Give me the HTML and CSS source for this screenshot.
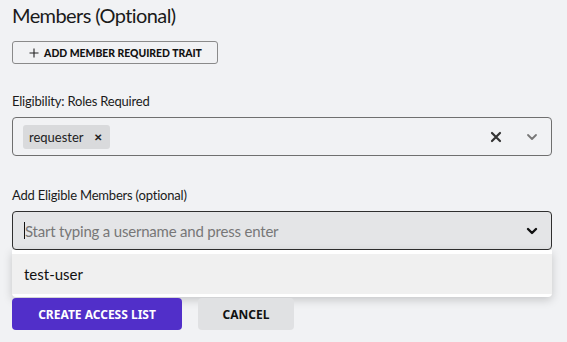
FILE: index.html
```html
<!doctype html>
<html lang="en">

<head>
  <meta charset="UTF-8" />
  <title>Members</title>
  <link rel="stylesheet" href="styles.css">
</head>

<body>
  <div class="section">
    <h2>Members (Optional)</h2>
    <button class="btn-outline" type="button">
      <svg class="plus" width="10" height="10" viewBox="0 0 10 10">
        <path d="M5 0.5 V9.5 M0.5 5 H9.5" stroke="#222" stroke-width="1.1" />
      </svg>
      ADD MEMBER REQUIRED TRAIT
    </button>

    <div class="field">
      <label>Eligibility: Roles Required</label>
      <div class="select">
        <div class="values">
          <span class="chip">requester <span class="chip-x">&#x2715;</span></span>
        </div>
        <div class="indicators">
          <svg class="clear" width="14" height="14" viewBox="0 0 14 14">
            <path d="M3 3 L11 11 M11 3 L3 11" stroke="#333" stroke-width="2.2" stroke-linecap="round" />
          </svg>
          <svg class="chevron" width="14" height="14" viewBox="0 0 14 14">
            <path d="M3 5 L7 9 L11 5" stroke="#777" stroke-width="1.8" fill="none" stroke-linecap="round" stroke-linejoin="round" />
          </svg>
        </div>
      </div>
    </div>

    <div class="field">
      <label>Add Eligible Members (optional)</label>
      <div class="combo">
        <div class="select focused">
          <div class="values">
            <span class="caret"></span><span class="placeholder">Start typing a username and press enter</span>
          </div>
          <div class="indicators">
            <svg class="chevron" width="14" height="14" viewBox="0 0 14 14">
              <path d="M3 5 L7 9 L11 5" stroke="#111" stroke-width="2.4" fill="none" stroke-linecap="round" stroke-linejoin="round" />
            </svg>
          </div>
        </div>
        <div class="menu">
          <div class="option">test-user</div>
        </div>
      </div>
    </div>

    <div class="actions">
      <button class="btn-primary" type="button">CREATE ACCESS LIST</button>
      <button class="btn-secondary" type="button">CANCEL</button>
    </div>
  </div>
</body>

</html>
```

FILE: styles.css
```css
body {
  font-family: Lato, "Noto Sans", sans-serif;
  background: #f1f2f4;
  color: #1a1a1a;
  margin: 0;
}

.section {
  padding: 0 15px 0 12px;
  width: 540px;
}

.section h2 {
  font-size: 20px;
  font-weight: 400;
  margin: 0;
  padding-top: 1px;
  line-height: 28px;
  letter-spacing: -0.6px;
}

.btn-outline {
  margin-top: 12px;
  height: 23px;
  width: 206px;
  border: 1px solid #8a8a8a;
  border-radius: 3px;
  background: transparent;
  font-family: Lato, sans-serif;
  font-size: 10.4px;
  font-weight: 900;
  color: #111;
  display: flex;
  align-items: center;
  justify-content: center;
  gap: 5px;
  padding: 0 0 0 1px;
}

.field {
  margin-top: 28px;
}

.field label {
  display: block;
  font-size: 13px;
  line-height: 18px;
  margin-bottom: 7px;
  letter-spacing: -0.2px;
}

.field + .field {
  margin-top: 30px;
}

.select {
  height: 39px;
  box-sizing: border-box;
  border: 1px solid #6f6f6f;
  border-radius: 4px;
  display: flex;
  align-items: center;
  justify-content: space-between;
  padding: 0 12px 0 10px;
}

.values {
  display: flex;
  align-items: center;
}

.chip {
  background: #d9dadc;
  border-radius: 3px;
  height: 24px;
  width: 87px;
  box-sizing: border-box;
  padding: 0 8px 0 6px;
  display: flex;
  align-items: center;
  justify-content: space-between;
  font-size: 13px;
  color: #222;
}

.chip-x {
  font-size: 10px;
  font-weight: 700;
  font-family: "Noto Sans", sans-serif;
}

.indicators {
  display: flex;
  align-items: center;
  gap: 22px;
}

.select.focused {
  background: #e4e5e7;
  border-color: #2f2f2f;
  padding-left: 11px;
}

.caret {
  width: 1px;
  height: 17px;
  background: #111;
}

.placeholder {
  font-size: 15px;
  color: #777;
  letter-spacing: -0.2px;
}

.menu {
  background: #fff;
  border-radius: 0 0 4px 4px;
  box-shadow: 0 3px 10px rgba(0, 0, 0, 0.18);
  padding: 4px 0 3px;
}

.option {
  background: #f0f0f0;
  height: 40px;
  line-height: 40px;
  padding-left: 12px;
  font-size: 15px;
  color: #111;
}

.actions {
  display: flex;
  gap: 16px;
  margin-top: 1px;
}

.actions button {
  height: 32px;
  border: none;
  border-radius: 4px;
  font-family: "Noto Sans", sans-serif;
  font-size: 12px;
  font-weight: 700;
  padding: 0;
}

.btn-primary {
  width: 170px;
  background: #512fc9;
  color: #fff;
}

.btn-secondary {
  width: 96px;
  background: #e0e1e3;
  color: #111;
}
```
